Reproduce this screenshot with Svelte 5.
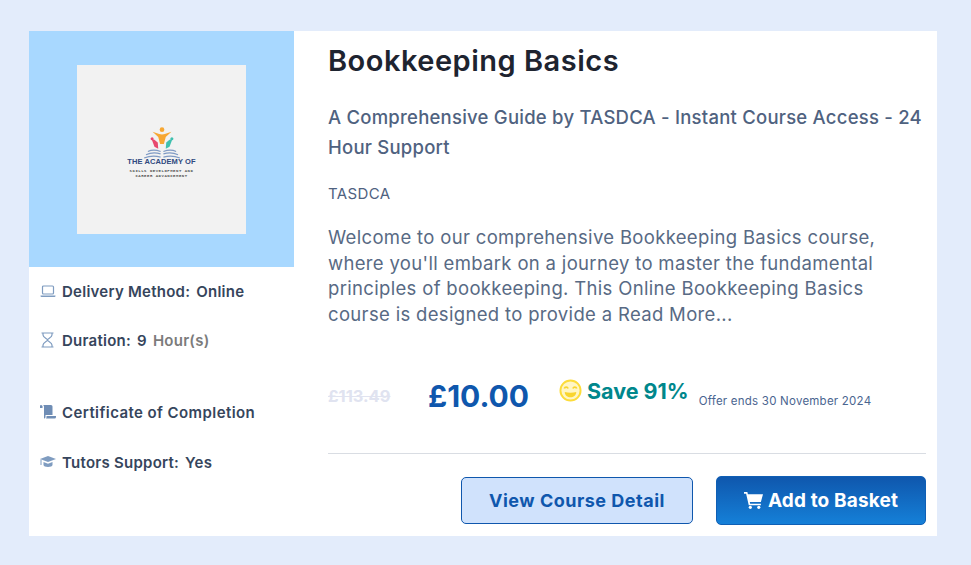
<script>
  const features = [
    { icon: 'laptop', label: 'Delivery Method:', value: 'Online', mute: '' },
    { icon: 'hourglass', label: 'Duration:', value: '9', mute: 'Hour(s)' },
    { icon: 'scroll', label: 'Certificate of Completion', value: '', mute: '' },
    { icon: 'cap', label: 'Tutors Support:', value: 'Yes', mute: '' }
  ];
</script>

<div class="page">
  <article class="card">
    <aside class="side">
      <div class="thumb">
        <div class="logo">
          <svg class="mark" viewBox="0 0 40 34" width="38" height="32" aria-hidden="true">
            <path d="M10 5l7 2.500c1.500.6 4.500.6 6 0L30 5l-6 5.500-2 7.500h-4l-2-7.500z" fill="#f7a733"/>
            <circle cx="20" cy="2.800" r="2.500" fill="#f7a733"/>
            <path d="M9 13l3 .5 3.500 3 .5 6.500-4-2z" fill="#e8486e"/>
            <circle cx="9.500" cy="12.500" r="1.600" fill="#e8486e"/>
            <path d="M31 13l-3 .5-3.500 3-.5 6.500 4-2z" fill="#3fc0ae"/>
            <circle cx="30.500" cy="12.500" r="1.600" fill="#3fc0ae"/>
            <path d="M1 33c6-2.500 12-2.500 17.500-1M3 29.500c5-2.500 10.500-2.500 15.500-1M5 26c4-2 8.500-2 13.500 0M39 33c-6-2.500-12-2.500-17.500-1M37 29.500c-5-2.500-10.500-2.500-15.500-1M35 26c-4-2-8.500-2-13.500 0" fill="none" stroke="#7f9ac4" stroke-width="1.300"/>
          </svg>
          <div class="brand">THE ACADEMY OF</div>
          <div class="tag">SKILLS DEVELOPMENT AND<br />CAREER ADVANCEMENT</div>
        </div>
      </div>
      <ul class="features">
        {#each features as f}
          <li class="feature {f.icon}">
            <span class="ico">
              {#if f.icon === 'laptop'}
                <svg viewBox="0 0 16 13" width="16" height="13"><rect x="2.500" y="1" width="11" height="8" rx="1" fill="none" stroke="#7f9cc0" stroke-width="1.200"/><path d="M.5 10.500h15v.5a1 1 0 0 1-1 1h-13a1 1 0 0 1-1-1z" fill="#7f9cc0"/></svg>
              {:else if f.icon === 'hourglass'}
                <svg viewBox="0 0 13 16" width="13" height="16"><path d="M.5 1h12M.5 15h12M2 1v2c0 2.500 4.500 3.500 4.500 5S2 10.500 2 13v2M11 1v2c0 2.500-4.500 3.500-4.500 5S11 10.500 11 13v2" fill="none" stroke="#7f9cc0" stroke-width="1.200"/></svg>
              {:else if f.icon === 'scroll'}
                <svg viewBox="0 0 16 14" width="16" height="14"><path d="M3 0h8a1.500 1.500 0 0 1 1.500 1.500V10h-7v2a1.500 1.500 0 0 1-1.500 1.500V2A2 2 0 0 0 3 0z" fill="#6f8db5"/><path d="M1 0a1.500 1.500 0 0 1 1.500 1.500V3H0V1a1 1 0 0 1 1-1z" fill="#6f8db5"/><path d="M6.500 11H16v1a1.500 1.500 0 0 1-1.500 1.500H6a2 2 0 0 0 .5-1.500z" fill="#6f8db5"/></svg>
              {:else}
                <svg viewBox="0 0 16 12" width="16" height="12"><path d="M8 0l8 3-8 3-8-3z" fill="#7f9cc0"/><path d="M3.500 6v3c0 1 2 2 4.500 2s4.500-1 4.500-2V6L8 7.700z" fill="#7f9cc0"/><path d="M1 3.500V9" stroke="#7f9cc0" stroke-width="1"/></svg>
              {/if}
            </span>
            <span class="flabel">{f.label}</span>
            {#if f.value}<span class="fvalue">{f.value}</span>{/if}
            {#if f.mute}<span class="fmute">{f.mute}</span>{/if}
          </li>
        {/each}
      </ul>
    </aside>

    <section class="main">
      <h1>Bookkeeping Basics</h1>
      <h2>A Comprehensive Guide by TASDCA - Instant Course Access - 24 Hour Support</h2>
      <p class="vendor">TASDCA</p>
      <p class="desc">Welcome to our comprehensive Bookkeeping Basics course, where you'll embark on a journey to master the fundamental principles of bookkeeping. This Online Bookkeeping Basics course is designed to provide a Read More...</p>

      <div class="prices">
        <s class="old">£113.49</s>
        <span class="now">£10.00</span>
        <svg class="smile" viewBox="0 0 24 24" width="23" height="23" aria-hidden="true">
          <circle cx="12" cy="12" r="10.500" fill="#fff6c4" stroke="#fddc3a" stroke-width="2"/>
          <path d="M5.500 10c.7-2 3.300-2 4 0M14.500 10c.7-2 3.300-2 4 0" fill="none" stroke="#f9d52e" stroke-width="1.800"/>
          <path d="M6 13.500c3.500 1 8.500 1 12 0 0 3.500-3 5.500-6 5.500s-6-2-6-5.500z" fill="#f9d52e"/>
        </svg>
        <span class="save">Save 91%</span>
        <span class="offer">Offer ends 30 November 2024</span>
      </div>

      <div class="actions">
        <button class="btn ghost">View Course Detail</button>
        <button class="btn solid">
          <svg viewBox="0 0 18 16" width="19" height="17" aria-hidden="true"><path d="M0 0h3.200l.5 2H18l-2 7.500H5.500l.3 1.500H16v1.500H4.500L2 1.500H0z" fill="#fff"/><circle cx="6" cy="14.500" r="1.500" fill="#fff"/><circle cx="14" cy="14.500" r="1.500" fill="#fff"/></svg>
          Add to Basket
        </button>
      </div>
    </section>
  </article>
</div>

<style>
  :global(body) { margin: 0; background: #e3ecfb; font-family: "Inter", "Open Sans", sans-serif; }
  .page { height: 565px; padding: 31px 34px 29px 29px; box-sizing: border-box; overflow: hidden; }
  .card { display: flex; background: #fff; height: 505px; }
  .side { width: 265px; flex: none; }
  .thumb { height: 236px; background: #a8d8ff; display: flex; align-items: center; justify-content: center; }
  .logo { width: 169px; height: 169px; background: #f2f2f2; display: flex; flex-direction: column; align-items: center; padding-top: 62px; box-sizing: border-box; }
  .mark { display: block; margin-bottom: -2px; }
  .brand { font: 700 7.500px/9px "Liberation Sans", sans-serif; color: #2f4a7f; letter-spacing: .1px; }
  .tag { font: 700 4px/5px "Liberation Mono", monospace; color: #555; letter-spacing: .5px; text-align: center; margin-top: 3px; }
  .features { list-style: none; margin: 0; padding: 15px 0 0 11px; }
  .feature { display: flex; align-items: center; font-size: 15px; letter-spacing: .25px; font-weight: 600; color: #36455c; height: 18px; }
  .hourglass { margin-top: 31px; }
  .scroll { margin-top: 54px; letter-spacing: .42px; }
  .cap { margin-top: 32px; }
  .ico { width: 22px; flex: none; display: flex; }
  .hourglass .ico { padding-left: 1px; width: 21px; }
  .flabel { margin-right: 6px; }
  .fmute { color: #7b7b7b; }
  .fvalue { margin-right: 6px; }
  .main { flex: 1; padding: 0 11px 0 34px; min-width: 0; }
  h1 { margin: 12px 0 0; font-size: 29px; letter-spacing: .5px; line-height: 36px; font-weight: 600; color: #1e2430; }
  h2 { margin: 23px 0 0; font-size: 18.500px; letter-spacing: .23px; line-height: 30px; font-weight: 500; color: #4f6280; }
  .vendor { margin: 23px 0 0; font-size: 15px; letter-spacing: .4px; line-height: 18px; color: #4f6280; }
  .desc { margin: 22px 0 0; font-size: 18.500px; letter-spacing: .33px; line-height: 25.600px; color: #586a84; }
  .prices { display: flex; align-items: center; margin-top: 43px; height: 50px; border-bottom: 1px solid #d9dde3; padding-bottom: 33px; }
  .old { font-size: 16.500px; font-weight: 700; color: #e0e3f0; width: 100px; margin-top: 2px; }
  .now { font-size: 30px; font-weight: 700; color: #0f57ad; width: 131px; margin-top: 2px; }
  .smile { margin: -9px 5px 0 0; flex: none; }
  .save { font-size: 21.500px; font-weight: 700; color: #00878c; margin: -9px 11px 0 0; }
  .offer { font-size: 11.500px; letter-spacing: .23px; color: #4a6590; margin-top: 12px; margin-left: -1px; }
  .actions { display: flex; justify-content: flex-end; align-items: center; gap: 23px; margin-top: 22px; }
  .btn { display: flex; align-items: center; justify-content: center; gap: 5px; box-sizing: border-box; font-family: inherit; font-weight: 700; border-radius: 5px; }
  .ghost { width: 232px; height: 47px; background: #d0e2fc; border: 1px solid #0f57ad; color: #0f57ad; font-size: 18px; letter-spacing: .5px; }
  .solid { width: 210px; height: 49px; background: linear-gradient(#0f57ad, #1580d8); border: 1px solid #0f5fb5; color: #fff; font-size: 19px; letter-spacing: .15px; }
</style>
